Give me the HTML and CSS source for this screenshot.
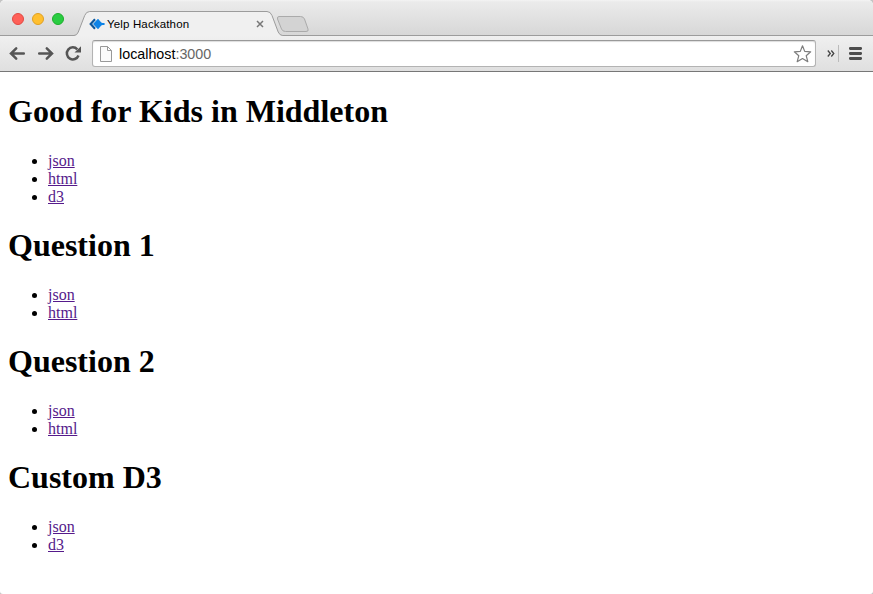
FILE: index.html
```html
<!DOCTYPE html>
<html lang="en">
<head>
<meta charset="utf-8">
<title>Yelp Hackathon</title>
<link rel="stylesheet" href="styles.css">
</head>
<body>
<div class="window">
  <header class="tabstrip">
    <div class="lights"><span class="light red"></span><span class="light yellow"></span><span class="light green"></span></div>
    <div class="tab">
      <svg class="tab-shape" width="244" height="36" viewBox="0 0 244 36">
        <path d="M0 36V35.500H1Q4 35.500 5.300 32L11.700 15.500Q13.200 11.500 16.700 11.500H194Q197.500 11.500 199 15.500L205.200 32Q206.700 35.500 209.700 35.500H213V36Z" fill="#f0f0f0"/>
        <path d="M0 35.500H1Q4 35.500 5.300 32L11.700 15.500Q13.200 11.500 16.700 11.500H194Q197.500 11.500 199 15.500L205.200 32Q206.700 35.500 209.700 35.500H213" fill="none" stroke="#9c9c9c"/>
        <path d="M206 16.500H227.500Q230.500 16.500 231.500 19L235 29Q236 31.500 233 31.500H212.500Q209.500 31.500 208.500 29L204.500 19Q204 16.500 206 16.500Z" fill="#d3d3d3" stroke="#aaa"/>
      </svg>
      <svg class="favicon" width="16" height="12" viewBox="0 0 16 12">
        <path d="M6 1.300L1.700 6L6 10.700" fill="none" stroke="#0b579c" stroke-width="2.200"/>
        <path d="M4 6L9 .7L12.300 4.500L15.700 6L12.300 7.500L9 11.300Z" fill="#0d83e6"/>
        <path d="M13 6H15.500" stroke="#0d83e6" stroke-width="2"/>
      </svg>
      <span class="title">Yelp Hackathon</span>
      <svg class="close" width="8" height="8" viewBox="0 0 8 8"><path d="M1 1L7 7M7 1L1 7" stroke="#777" stroke-width="1.500"/></svg>
    </div>
  </header>
  <nav class="toolbar">
    <svg class="nav-icons" width="92" height="35" viewBox="0 0 92 35">
      <g fill="none" stroke="#555" stroke-width="2.500" stroke-linecap="round">
        <path d="M11.500 17.500H23.800M16.200 12.300L11 17.500L16.200 22.700"/>
        <path d="M39.200 17.500H51.500M46.800 12.300L52 17.500L46.800 22.700"/>
        <path stroke-linecap="butt" d="M77.300 13.300A6 6 0 1 0 78.500 19.500"/>
      </g>
      <path d="M81 10.300V16.500H74.500Z" fill="#555"/>
    </svg>
    <div class="address">
      <svg class="page-icon" width="12" height="16" viewBox="0 0 12 16"><path d="M.5.500H7.500L11.500 4.500V15.500H.5ZM7.500.500V4.500H11.500" fill="#fafafa" stroke="#999"/></svg>
      <span class="url">localhost<span class="port">:3000</span></span>
      <svg class="star" width="20" height="20" viewBox="0 0 20 20"><path d="M9.500 1.800L11.700 7.400L17.700 7.800L13.200 11.700L14.800 17.700L9.500 14.500L4.200 17.700L5.800 11.700L1.300 7.800L7.300 7.400Z" fill="#fff" stroke="#7d7d7d" stroke-width="1.200" stroke-linejoin="round"/></svg>
    </div>
    <svg class="menu-icons" width="57" height="35" viewBox="0 0 57 35">
      <path d="M11.800 14.500L14.300 17.500L11.800 20.500M15.300 14.500L17.800 17.500L15.300 20.500" fill="none" stroke="#444" stroke-width="1.300"/>
      <path d="M22.500 9V26" stroke="#bbb"/>
      <path d="M34.300 12.500H44.700M34.300 17.500H44.700M34.300 22.500H44.700" stroke="#4d4d4d" stroke-width="2.800" stroke-linecap="round"/>
    </svg>
  </nav>
  <main class="page">
    <h1>Good for Kids in Middleton</h1>
    <ul><li><a href="#">json</a></li><li><a href="#">html</a></li><li><a href="#">d3</a></li></ul>
    <h1>Question 1</h1>
    <ul><li><a href="#">json</a></li><li><a href="#">html</a></li></ul>
    <h1>Question 2</h1>
    <ul><li><a href="#">json</a></li><li><a href="#">html</a></li></ul>
    <h1>Custom D3</h1>
    <ul><li><a href="#">json</a></li><li><a href="#">d3</a></li></ul>
  </main>
</div>
</body>
</html>
```
FILE: styles.css
```css
* { box-sizing: border-box; }
html { background: #c4c4c4; }
body { margin: 0; overflow: hidden; }
svg { display: block; flex: none; }
.window {
  height: 594px;
  display: flex;
  flex-direction: column;
  border-radius: 5px 5px 3px 3px;
  overflow: hidden;
  background: #fff;
}
.tabstrip {
  height: 36px;
  flex: none;
  display: flex;
  background: linear-gradient(#f4f4f4 0, #ebebeb 2px, #d7d7d7 35px);
  border-bottom: 1px solid #9c9c9c;
}
.lights { display: flex; gap: 8px; padding: 13px 0 0 12px; width: 73px; }
.light { width: 12px; height: 12px; border-radius: 50%; border: 1px solid; }
.red { background: #ff6058; border-color: #e14942; }
.yellow { background: #ffbf2f; border-color: #dfa023; }
.green { background: #29cc41; border-color: #1dad2b; }
.tab {
  position: relative;
  width: 244px;
  height: 36px;
  display: flex;
  align-items: center;
  padding: 12px 0 0 16px;
  font: 11.5px "Liberation Sans", Arial, sans-serif;
  letter-spacing: 0.15px;
}
.tab-shape { position: absolute; left: 0; top: 0; }
.favicon, .title, .close { position: relative; }
.title { width: 149px; margin-left: 2px; line-height: 24px; white-space: nowrap; }
.toolbar {
  height: 36px;
  flex: none;
  display: flex;
  background: linear-gradient(#f0f0f0, #dfdfdf);
  border-bottom: 1px solid #777;
}
.address {
  flex: 1;
  height: 27px;
  margin-top: 4px;
  display: flex;
  align-items: center;
  padding: 0 2px 0 7px;
  background: #fff;
  border: 1px solid #b3b3b3;
  border-top-color: #999;
  border-radius: 3px;
  box-shadow: inset 0 1px 1px #ddd;
}
.url { flex: 1; margin-left: 7px; font: 14.3px/24px "Liberation Sans", Arial, sans-serif; }
.port { color: #666; }
.page {
  flex: 1;
  padding: 0 8px;
  display: flow-root;
  font: 16px/18px "Liberation Serif", "Times New Roman", serif;
  color: #000;
}
h1 { margin: 21.44px 0; font-size: 32px; line-height: 37px; }
ul { margin: 0; padding-left: 40px; }
a { color: #551a8b; }
```
